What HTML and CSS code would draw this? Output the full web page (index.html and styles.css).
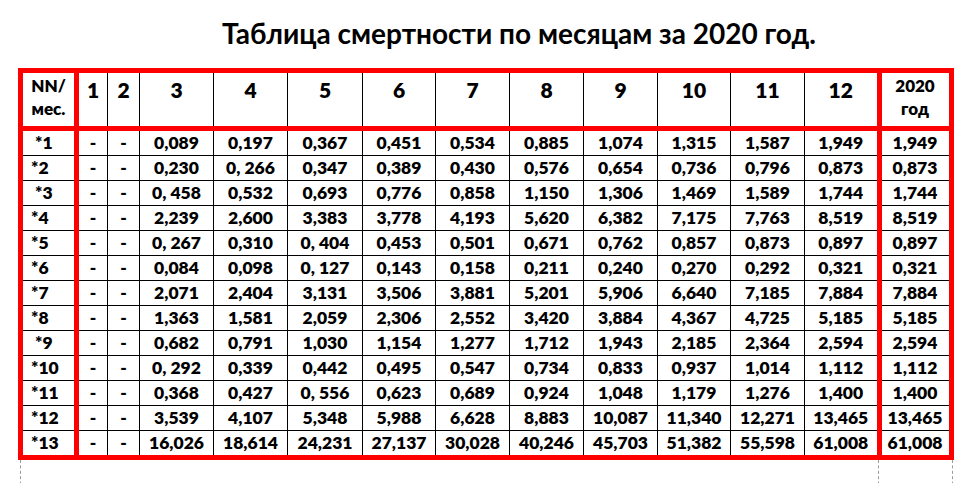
FILE: index.html
```html
<!DOCTYPE html>
<html lang="ru">
<head>
<meta charset="utf-8">
<title>Таблица смертности</title>
<link rel="stylesheet" href="styles.css">
</head>
<body>
<div class="page">
  <h1 class="title">Таблица смертности по месяцам за 2020 год.</h1>
  <table class="grid">
    <colgroup>
      <col class="c-id"><col class="c-s1"><col class="c-s2">
      <col class="c-m"><col class="c-m"><col class="c-m5"><col class="c-m6"><col class="c-m"><col class="c-m"><col class="c-m"><col class="c-m6"><col class="c-m"><col class="c-m12">
      <col class="c-year">
    </colgroup>
    <thead>
      <tr class="head">
        <th class="id hsmall">NN/<br>мес.</th>
        <th>1</th><th>2</th><th>3</th><th>4</th><th>5</th><th>6</th><th>7</th><th>8</th><th>9</th><th>10</th><th>11</th><th>12</th>
        <th class="year hsmall">2020<br>год</th>
      </tr>
    </thead>
    <tbody>
      <tr><td class="id">&nbsp;*1</td><td>-</td><td>-</td><td>0,089</td><td>0,197</td><td>0,367</td><td>0,451</td><td>0,534</td><td>0,885</td><td>1,074</td><td>1,315</td><td>1,587</td><td>1,949</td><td class="year">1,949</td></tr>
      <tr><td class="id">*2</td><td>-</td><td>-</td><td>0,230</td><td>0, 266</td><td>0,347</td><td>0,389</td><td>0,430</td><td>0,576</td><td>0,654</td><td>0,736</td><td>0,796</td><td>0,873</td><td class="year">0,873</td></tr>
      <tr><td class="id">&nbsp;*3</td><td>-</td><td>-</td><td>0, 458</td><td>0,532</td><td>0,693</td><td>0,776</td><td>0,858</td><td>1,150</td><td>1,306</td><td>1,469</td><td>1,589</td><td>1,744</td><td class="year">1,744</td></tr>
      <tr><td class="id">*4</td><td>-</td><td>-</td><td>2,239</td><td>2,600</td><td>3,383</td><td>3,778</td><td>4,193</td><td>5,620</td><td>6,382</td><td>7,175</td><td>7,763</td><td>8,519</td><td class="year">8,519</td></tr>
      <tr><td class="id">*5</td><td>-</td><td>-</td><td>0, 267</td><td>0,310</td><td>0, 404</td><td>0,453</td><td>0,501</td><td>0,671</td><td>0,762</td><td>0,857</td><td>0,873</td><td>0,897</td><td class="year">0,897</td></tr>
      <tr><td class="id">*6</td><td>-</td><td>-</td><td>0,084</td><td>0,098</td><td>0, 127</td><td>0,143</td><td>0,158</td><td>0,211</td><td>0,240</td><td>0,270</td><td>0,292</td><td>0,321</td><td class="year">0,321</td></tr>
      <tr><td class="id">*7</td><td>-</td><td>-</td><td>2,071</td><td>2,404</td><td>3,131</td><td>3,506</td><td>3,881</td><td>5,201</td><td>5,906</td><td>6,640</td><td>7,185</td><td>7,884</td><td class="year">7,884</td></tr>
      <tr><td class="id">*8</td><td>-</td><td>-</td><td>1,363</td><td>1,581</td><td>2,059</td><td>2,306</td><td>2,552</td><td>3,420</td><td>3,884</td><td>4,367</td><td>4,725</td><td>5,185</td><td class="year">5,185</td></tr>
      <tr><td class="id">&nbsp;*9</td><td>-</td><td>-</td><td>0,682</td><td>0,791</td><td>1,030</td><td>1,154</td><td>1,277</td><td>1,712</td><td>1,943</td><td>2,185</td><td>2,364</td><td>2,594</td><td class="year">2,594</td></tr>
      <tr><td class="id">*10</td><td>-</td><td>-</td><td>0, 292</td><td>0,339</td><td>0,442</td><td>0,495</td><td>0,547</td><td>0,734</td><td>0,833</td><td>0,937</td><td>1,014</td><td>1,112</td><td class="year">1,112</td></tr>
      <tr><td class="id">*11</td><td>-</td><td>-</td><td>0,368</td><td>0,427</td><td>0, 556</td><td>0,623</td><td>0,689</td><td>0,924</td><td>1,048</td><td>1,179</td><td>1,276</td><td>1,400</td><td class="year">1,400</td></tr>
      <tr><td class="id">*12</td><td>-</td><td>-</td><td>3,539</td><td>4,107</td><td>5,348</td><td>5,988</td><td>6,628</td><td>8,883</td><td>10,087</td><td>11,340</td><td>12,271</td><td>13,465</td><td class="year">13,465</td></tr>
      <tr><td class="id">*13</td><td>-</td><td>-</td><td>16,026</td><td>18,614</td><td>24,231</td><td>27,137</td><td>30,028</td><td>40,246</td><td>45,703</td><td>51,382</td><td>55,598</td><td>61,008</td><td class="year">61,008</td></tr>
    </tbody>
  </table>
  <div class="tail">
    <div class="tail-main"></div>
    <div class="tail-year"></div>
  </div>
</div>
</body>
</html>
```

FILE: styles.css
```css
html, body {
  margin: 0;
  padding: 0;
  background: #ffffff;
}

.page {
  padding: 0 0 0 18px;
  font-family: Lato, "Open Sans", "Noto Sans", sans-serif;
  font-weight: 700;
  color: #000000;
}

.title {
  margin: 0;
  padding: 16px 0 0 204px;
  height: 68px;
  box-sizing: border-box;
  font-size: 28px;
  line-height: 34px;
  font-weight: 700;
  white-space: nowrap;
}

.grid {
  border-collapse: collapse;
  table-layout: fixed;
  border: 5px solid #ff0000;
}

.c-id { width: 56px; }
.c-s1 { width: 31px; }
.c-s2 { width: 32px; }
.c-m { width: 74px; }
.c-m5 { width: 75px; }
.c-m6 { width: 73px; }
.c-m12 { width: 74.5px; }
.c-year { width: 72px; }

.grid th,
.grid td {
  border: 1px solid #000000;
  padding: 0;
  text-align: center;
  white-space: nowrap;
  font-weight: 800;
}

.grid th {
  height: 49px;
  vertical-align: top;
  padding-top: 4px;
  font-size: 21px;
  line-height: 26px;
  border-bottom: 5px solid #ff0000;
}

.grid th.hsmall {
  font-size: 17px;
  line-height: 23px;
  padding-top: 1px;
}

.grid td {
  height: 24px;
  font-size: 17.5px;
  line-height: 22px;
  vertical-align: middle;
}

.grid .id {
  border-right: 5px solid #ff0000;
}

.grid td.id {
  text-align: left;
  padding-left: 8px;
}

.grid .year {
  border-left: 5px solid #ff0000;
}

.tail {
  display: flex;
  margin-left: 2px;
  width: 933px;
  height: 30px;
}

.tail-main {
  width: 857px;
  border-left: 1px dashed #9a9a9a;
}

.tail-year {
  flex: 1;
  border-left: 1px dashed #9a9a9a;
  border-right: 1px dashed #9a9a9a;
}
```
